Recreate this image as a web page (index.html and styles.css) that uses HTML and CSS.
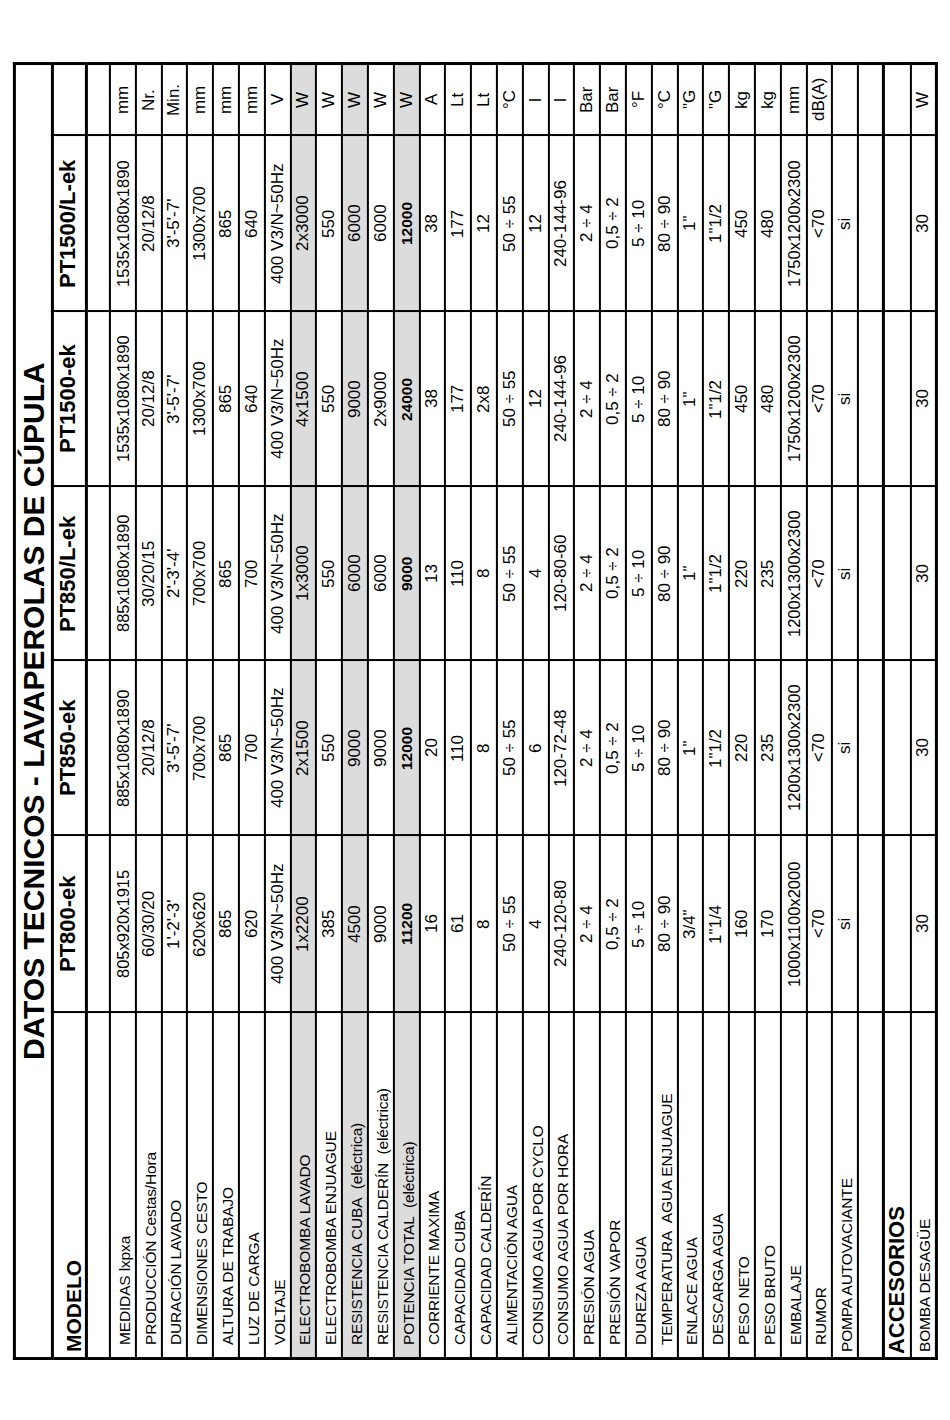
FILE: index.html
```html
<!DOCTYPE html>
<html lang="es">
<head>
<meta charset="utf-8">
<title>Datos técnicos - Lavaperolas de cúpula</title>
<link rel="stylesheet" href="styles.css">
</head>
<body>
<div class="page">
<table class="specs">
  <colgroup>
    <col class="c-label">
    <col class="c-m1">
    <col class="c-m2">
    <col class="c-m3">
    <col class="c-m4">
    <col class="c-m5">
    <col class="c-unit">
  </colgroup>
  <thead>
    <tr class="title-row"><th colspan="7">DATOS TECNICOS - LAVAPEROLAS DE CÚPULA</th></tr>
    <tr class="model-row">
      <th class="lbl">MODELO</th>
      <th>PT800-ek</th><th>PT850-ek</th><th>PT850/L-ek</th><th>PT1500-ek</th><th>PT1500/L-ek</th><th></th>
    </tr>
  </thead>
  <tbody>
    <tr class="spacer"><td></td><td></td><td></td><td></td><td></td><td></td><td></td></tr>
    <tr><td class="lbl">MEDIDAS lxpxa</td><td class="dims">805x920x1915</td><td class="dims">885x1080x1890</td><td class="dims">885x1080x1890</td><td class="dims">1535x1080x1890</td><td class="dims">1535x1080x1890</td><td>mm</td></tr>
    <tr><td class="lbl">PRODUCCIÓN Cestas/Hora</td><td>60/30/20</td><td>20/12/8</td><td>30/20/15</td><td>20/12/8</td><td>20/12/8</td><td>Nr.</td></tr>
    <tr><td class="lbl">DURACIÓN LAVADO</td><td>1'-2'-3'</td><td>3'-5'-7'</td><td>2'-3'-4'</td><td>3'-5'-7'</td><td>3'-5'-7'</td><td>Min.</td></tr>
    <tr><td class="lbl">DIMENSIONES CESTO</td><td>620x620</td><td>700x700</td><td>700x700</td><td>1300x700</td><td>1300x700</td><td>mm</td></tr>
    <tr><td class="lbl">ALTURA DE TRABAJO</td><td>865</td><td>865</td><td>865</td><td>865</td><td>865</td><td>mm</td></tr>
    <tr><td class="lbl">LUZ DE CARGA</td><td>620</td><td>700</td><td>700</td><td>640</td><td>640</td><td>mm</td></tr>
    <tr><td class="lbl">VOLTAJE</td><td>400 V3/N~50Hz</td><td>400 V3/N~50Hz</td><td>400 V3/N~50Hz</td><td>400 V3/N~50Hz</td><td>400 V3/N~50Hz</td><td>V</td></tr>
    <tr class="shade"><td class="lbl">ELECTROBOMBA LAVADO</td><td>1x2200</td><td>2x1500</td><td>1x3000</td><td>4x1500</td><td>2x3000</td><td>W</td></tr>
    <tr><td class="lbl">ELECTROBOMBA ENJUAGUE</td><td>385</td><td>550</td><td>550</td><td>550</td><td>550</td><td>W</td></tr>
    <tr class="shade"><td class="lbl">RESISTENCIA CUBA&nbsp; (eléctrica)</td><td>4500</td><td>9000</td><td>6000</td><td>9000</td><td>6000</td><td>W</td></tr>
    <tr><td class="lbl">RESISTENCIA CALDERÍN&nbsp; (eléctrica)</td><td>9000</td><td>9000</td><td>6000</td><td>2x9000</td><td>6000</td><td>W</td></tr>
    <tr class="shade strong"><td class="lbl">POTENCIA TOTAL&nbsp; (eléctrica)</td><td>11200</td><td>12000</td><td>9000</td><td>24000</td><td>12000</td><td>W</td></tr>
    <tr><td class="lbl">CORRIENTE MAXIMA</td><td>16</td><td>20</td><td>13</td><td>38</td><td>38</td><td>A</td></tr>
    <tr><td class="lbl">CAPACIDAD CUBA</td><td>61</td><td>110</td><td>110</td><td>177</td><td>177</td><td>Lt</td></tr>
    <tr><td class="lbl">CAPACIDAD CALDERÍN</td><td>8</td><td>8</td><td>8</td><td>2x8</td><td>12</td><td>Lt</td></tr>
    <tr><td class="lbl">ALIMENTACIÓN AGUA</td><td>50 ÷ 55</td><td>50 ÷ 55</td><td>50 ÷ 55</td><td>50 ÷ 55</td><td>50 ÷ 55</td><td>°C</td></tr>
    <tr><td class="lbl">CONSUMO AGUA POR CYCLO</td><td>4</td><td>6</td><td>4</td><td>12</td><td>12</td><td>l</td></tr>
    <tr><td class="lbl">CONSUMO AGUA POR HORA</td><td>240-120-80</td><td>120-72-48</td><td>120-80-60</td><td>240-144-96</td><td>240-144-96</td><td>l</td></tr>
    <tr><td class="lbl">PRESIÓN AGUA</td><td>2 ÷ 4</td><td>2 ÷ 4</td><td>2 ÷ 4</td><td>2 ÷ 4</td><td>2 ÷ 4</td><td>Bar</td></tr>
    <tr><td class="lbl">PRESIÓN VAPOR</td><td>0,5 ÷ 2</td><td>0,5 ÷ 2</td><td>0,5 ÷ 2</td><td>0,5 ÷ 2</td><td>0,5 ÷ 2</td><td>Bar</td></tr>
    <tr><td class="lbl">DUREZA AGUA</td><td>5 ÷ 10</td><td>5 ÷ 10</td><td>5 ÷ 10</td><td>5 ÷ 10</td><td>5 ÷ 10</td><td>°F</td></tr>
    <tr><td class="lbl">TEMPERATURA&nbsp; AGUA ENJUAGUE</td><td>80 ÷ 90</td><td>80 ÷ 90</td><td>80 ÷ 90</td><td>80 ÷ 90</td><td>80 ÷ 90</td><td>°C</td></tr>
    <tr><td class="lbl">ENLACE AGUA</td><td>3/4"</td><td>1"</td><td>1"</td><td>1"</td><td>1"</td><td>"G</td></tr>
    <tr><td class="lbl">DESCARGA AGUA</td><td>1"1/4</td><td>1"1/2</td><td>1"1/2</td><td>1"1/2</td><td>1"1/2</td><td>"G</td></tr>
    <tr><td class="lbl">PESO NETO</td><td>160</td><td>220</td><td>220</td><td>450</td><td>450</td><td>kg</td></tr>
    <tr><td class="lbl">PESO BRUTO</td><td>170</td><td>235</td><td>235</td><td>480</td><td>480</td><td>kg</td></tr>
    <tr><td class="lbl">EMBALAJE</td><td class="dims">1000x1100x2000</td><td class="dims">1200x1300x2300</td><td class="dims">1200x1300x2300</td><td class="dims">1750x1200x2300</td><td class="dims">1750x1200x2300</td><td>mm</td></tr>
    <tr><td class="lbl">RUMOR</td><td>&lt;70</td><td>&lt;70</td><td>&lt;70</td><td>&lt;70</td><td>&lt;70</td><td>dB(A)</td></tr>
    <tr><td class="lbl lbl-tight">POMPA AUTOVACIANTE</td><td>si</td><td>si</td><td>si</td><td>si</td><td>si</td><td></td></tr>
    <tr class="blank"><td></td><td></td><td></td><td></td><td></td><td></td><td></td></tr>
    <tr class="section"><th class="lbl" scope="row">ACCESORIOS</th><td></td><td></td><td></td><td></td><td></td><td></td></tr>
    <tr class="last"><td class="lbl lbl-tight">BOMBA DESAGÜE</td><td>30</td><td>30</td><td>30</td><td>30</td><td>30</td><td>W</td></tr>
  </tbody>
</table>
</div>
</body>
</html>
```

FILE: styles.css
```css
html, body {
  margin: 0;
  padding: 0;
  background: #ffffff;
}

.page {
  padding: 62px 0 0 13px;
}

/* The sheet is printed in landscape: the table is laid out in a vertical
   writing mode and turned half a turn so that it reads bottom-to-top. */
.specs {
  writing-mode: vertical-rl;
  text-orientation: sideways;
  transform: rotate(180deg);
  border-collapse: collapse;
  table-layout: fixed;
  inline-size: 1295px;
  border: 3px solid #000;
  color: #000;
  font-family: "Liberation Sans", Arial, sans-serif;
  font-size: 17px;
  line-height: 20px;
}

.c-label { inline-size: 346px; }
.c-m1 { inline-size: 177px; }
.c-m2 { inline-size: 175px; }
.c-m3 { inline-size: 174px; }
.c-m4 { inline-size: 175px; }
.c-m5 { inline-size: 176px; }
.c-unit { inline-size: 72px; }

.specs th,
.specs td {
  border: 2px solid #000;
  padding: 0;
  text-align: center;
  vertical-align: middle;
  white-space: nowrap;
  font-weight: normal;
  overflow: hidden;
}

.specs tr {
  block-size: 25.8px;
}

/* title */
.title-row {
  block-size: 38px !important;
}
.title-row th {
  font-size: 30px;
  font-weight: bold;
  line-height: 34px;
  border-block-end: 3px solid #000;
}

/* model names */
.model-row {
  block-size: 33.5px !important;
}
.model-row th {
  font-size: 22px;
  font-weight: bold;
  line-height: 26px;
  border-block-end: 3px solid #000;
  padding-block-end: 2px;
}
.model-row th.lbl {
  font-size: 21px;
  letter-spacing: 0;
  padding-inline-start: 5px;
}

.spacer {
  block-size: 24px !important;
}

.blank {
  block-size: 25px !important;
}

/* row labels */
.specs .lbl {
  text-align: start;
  vertical-align: bottom;
  padding-inline-start: 12px;
  font-size: 15.5px;
  letter-spacing: -0.15px;
  line-height: 19px;
  padding-block-end: 1px;
}
.specs .lbl-tight {
  padding-inline-start: 5px;
}

.specs .dims {
  font-size: 16.5px;
}

.shade td,
.shade th {
  background: #dcdcdc;
}

.strong td {
  font-weight: bold;
  font-size: 15.5px;
}
.strong td.lbl {
  font-weight: normal;
  font-size: 15.5px;
}
.strong td:last-child {
  font-weight: normal;
  font-size: 17px;
}

.section th,
.section td {
  border-block-start: 3px solid #000;
}
.section th.lbl {
  font-weight: bold;
  font-size: 22px;
  letter-spacing: 0;
  line-height: 24px;
  padding-inline-start: 3px;
}
```
